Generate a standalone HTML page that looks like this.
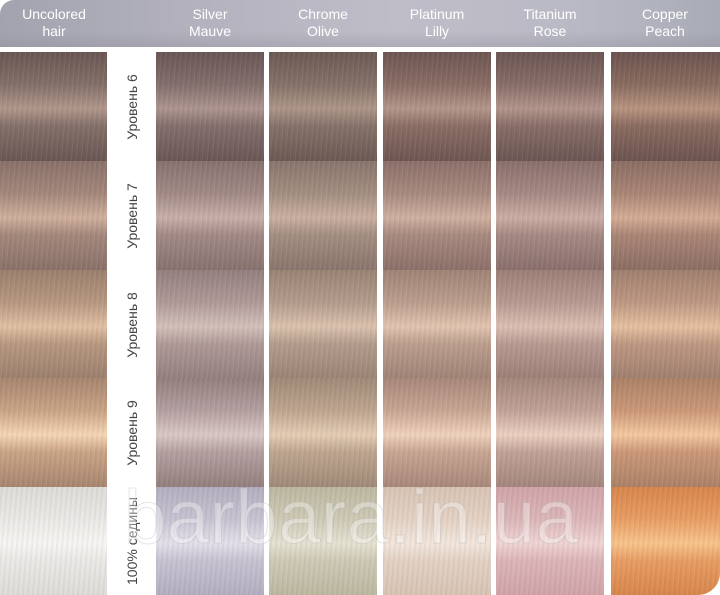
<!DOCTYPE html>
<html><head><meta charset="utf-8"><style>
body{margin:0;width:720px;height:595px;background:#fff;position:relative;overflow:hidden;font-family:"Liberation Sans","DejaVu Sans",sans-serif}
.hd{position:absolute;left:0;top:0;width:720px;height:47px;border-top-left-radius:14px;background:linear-gradient(90deg,#a3a3b0 0%,#b4b3bf 30%,#bfbdc8 55%,#b9b9c5 80%,#a8acb6 100%)}
.hd::after{content:"";position:absolute;left:0;right:0;bottom:0;height:16px;background:linear-gradient(to bottom,rgba(150,150,160,0),rgba(140,140,150,.35))}
.t{position:absolute;top:6px;width:108px;text-align:center;color:#fff;font-size:14px;line-height:17px;z-index:2}
.c{position:absolute;width:108px;height:109px;background:linear-gradient(to bottom,var(--d) 0%,var(--m) 30%,var(--l) 52%,var(--m) 68%,var(--d) 100%)}
.c::after{content:"";position:absolute;inset:0;background:repeating-linear-gradient(95deg,rgba(255,255,255,.06) 0 1px,rgba(0,0,0,.04) 1px 3px,rgba(255,255,255,0) 3px 5px)}
.lb{position:absolute;left:107px;width:49px;height:109px;display:flex;align-items:center;justify-content:center}
.lb span{transform:rotate(-90deg);white-space:nowrap;font-size:14px;color:#444}
.wm{position:absolute;left:124px;top:474px;font-size:76px;color:rgba(255,255,255,.35);-webkit-text-stroke:1px rgba(170,170,170,.3);letter-spacing:0.5px;z-index:5}
</style></head><body>
<div class="hd"></div>
<div class="t" style="left:0">Uncolored<br>hair</div>
<div class="t" style="left:156px">Silver<br>Mauve</div>
<div class="t" style="left:269px">Chrome<br>Olive</div>
<div class="t" style="left:383px">Platinum<br>Lilly</div>
<div class="t" style="left:496px">Titanium<br>Rose</div>
<div class="t" style="left:611px">Copper<br>Peach</div>

<div class="c" style="left:0;top:52px;width:107px;--d:#6a5753;--m:#84706a;--l:#b0978a"></div>
<div class="lb" style="top:52px"><span>Уровень 6</span></div>
<div class="c" style="left:156px;top:52px;--d:#6a5756;--m:#846f6d;--l:#ad9590"></div>
<div class="c" style="left:269px;top:52px;--d:#6c5a53;--m:#86726a;--l:#ad9688"></div>
<div class="c" style="left:383px;top:52px;--d:#6e5652;--m:#8a6e66;--l:#b4968a"></div>
<div class="c" style="left:496px;top:52px;--d:#6c5653;--m:#886e68;--l:#b2958c"></div>
<div class="c" style="left:611px;top:52px;width:109px;--d:#6c5450;--m:#8a6c60;--l:#b89480"></div>

<div class="c" style="left:0;top:161px;width:107px;--d:#8a726a;--m:#a4887c;--l:#d0b09c"></div>
<div class="lb" style="top:161px"><span>Уровень 7</span></div>
<div class="c" style="left:156px;top:161px;--d:#887270;--m:#a28a86;--l:#c8b0a8"></div>
<div class="c" style="left:269px;top:161px;--d:#8a766c;--m:#a48e82;--l:#cab0a0"></div>
<div class="c" style="left:383px;top:161px;--d:#8c716a;--m:#a88a80;--l:#d0b0a0"></div>
<div class="c" style="left:496px;top:161px;--d:#8a706c;--m:#a68a84;--l:#ccada4"></div>
<div class="c" style="left:611px;top:161px;width:109px;--d:#8c6e64;--m:#aa8676;--l:#d4ac94"></div>

<div class="c" style="left:0;top:270px;width:107px;--d:#9c806e;--m:#b89880;--l:#e0c0a4"></div>
<div class="lb" style="top:270px"><span>Уровень 8</span></div>
<div class="c" style="left:156px;top:270px;--d:#948080;--m:#b09a98;--l:#d4c0ba"></div>
<div class="c" style="left:269px;top:270px;--d:#9a8474;--m:#b49c8c;--l:#dac2ae"></div>
<div class="c" style="left:383px;top:270px;--d:#a08476;--m:#bc9e8e;--l:#e2c4b0"></div>
<div class="c" style="left:496px;top:270px;--d:#9c8078;--m:#b89a92;--l:#dcbeb2"></div>
<div class="c" style="left:611px;top:270px;width:109px;--d:#a08070;--m:#be9882;--l:#e6c0a0"></div>

<div class="c" style="left:0;top:378px;width:107px;--d:#a88670;--m:#caa486;--l:#f4d6b4"></div>
<div class="lb" style="top:378px"><span>Уровень 9</span></div>
<div class="c" style="left:156px;top:378px;--d:#94807e;--m:#b4a0a0;--l:#dac8c6"></div>
<div class="c" style="left:269px;top:378px;--d:#a08a78;--m:#bea690;--l:#e4cdb4"></div>
<div class="c" style="left:383px;top:378px;--d:#a8887a;--m:#c8a694;--l:#f0d2bc"></div>
<div class="c" style="left:496px;top:378px;--d:#a4867c;--m:#c2a298;--l:#ecd0c0"></div>
<div class="c" style="left:611px;top:378px;width:109px;--d:#ac8268;--m:#cc9878;--l:#f4c8a0"></div>

<div class="c" style="left:0;top:487px;width:107px;height:108px;--d:#dedcd8;--m:#ebe9e6;--l:#f6f5f2"></div>
<div class="lb" style="top:487px;height:108px"><span>100% седины</span></div>
<div class="c" style="left:156px;top:487px;height:108px;--d:#b4aec0;--m:#c8c3d2;--l:#e4e0ea"></div>
<div class="c" style="left:269px;top:487px;height:108px;--d:#bcb8a0;--m:#cecab6;--l:#e6e2d2"></div>
<div class="c" style="left:383px;top:487px;height:108px;--d:#d8c4b4;--m:#e4d2c4;--l:#f2e6dc"></div>
<div class="c" style="left:496px;top:487px;height:108px;--d:#d0a4a8;--m:#dcb6b8;--l:#f0d4d4"></div>
<div class="c" style="left:611px;top:487px;width:109px;height:108px;border-bottom-right-radius:22px;overflow:hidden;--d:#d8864c;--m:#e89e64;--l:#f8c48c"></div>
<div class="wm">barbara.in.ua</div>
</body></html>
